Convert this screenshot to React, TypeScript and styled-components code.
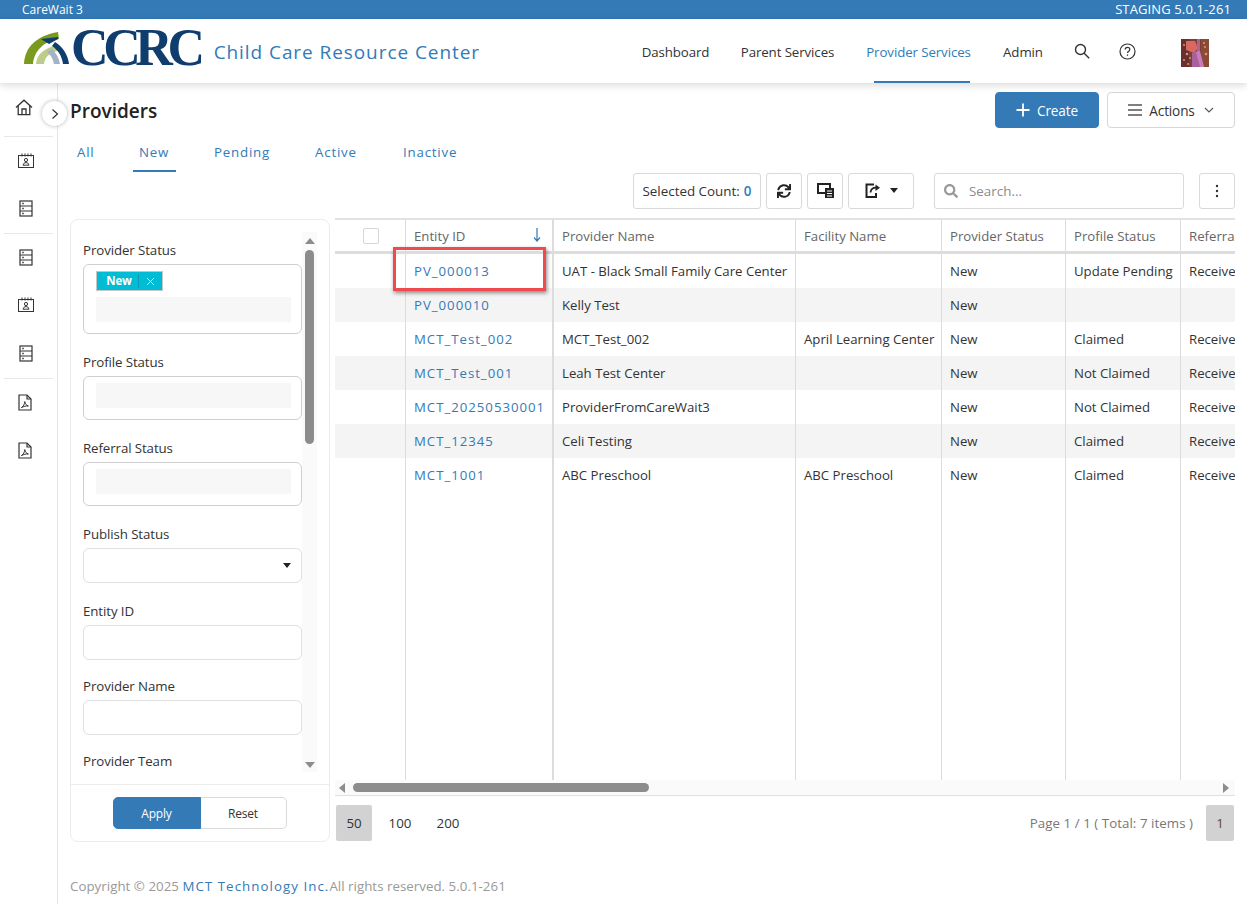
import React from 'react'
import styled, { createGlobalStyle } from 'styled-components'
import { FaSearch, FaSync } from 'react-icons/fa'

const FONT = '"Open Sans", "Noto Sans", sans-serif'
const BLUE = '#337ab7'

const GlobalStyle = createGlobalStyle`
  html, body { margin: 0; padding: 0; background: #fff; }
  body { font-family: ${FONT}; font-size: 14px; color: #333; width: 1247px; height: 904px; overflow: hidden; }
  * { box-sizing: border-box; }
`

const TopBar = styled.div`
  height: 19px;
  background: ${BLUE};
  color: #fff;
  font-size: 12px;
  line-height: 19px;
  display: flex;
  justify-content: space-between;
  padding: 0 16px 0 22px;
`

const StageTag = styled.span`
  font-size: 13px;
  letter-spacing: 0.12px;
`

const Header = styled.header`
  height: 64px;
  display: flex;
  align-items: center;
  padding-left: 24px;
  box-shadow: 0 2px 8px rgba(0, 0, 0, 0.16);
  position: relative;
  z-index: 2;
  background: #fff;
`

const LogoText = styled.span`
  font-family: "Liberation Serif", serif;
  font-weight: 700;
  font-size: 52px;
  line-height: 1;
  letter-spacing: -5.4px;
  color: #0f3d6e;
  margin-left: 1px;
  margin-top: -6px;
`

const SiteName = styled.span`
  font-size: 19px;
  letter-spacing: 0.93px;
  color: ${BLUE};
  margin-left: 14px;
  margin-top: 2px;
`

const Nav = styled.nav`
  margin-left: auto;
  display: flex;
  height: 100%;
  align-items: stretch;
`

const NavItem = styled.a<{ $active?: boolean; $w: number }>`
  width: ${(p) => p.$w}px;
  display: flex;
  align-items: center;
  justify-content: center;
  font-size: 13.3px;
  letter-spacing: -0.1px;
  color: ${(p) => (p.$active ? BLUE : '#333')};
  position: relative;
  padding-top: 1px;
  ${(p) =>
    p.$active &&
    `&::after { content: ''; position: absolute; left: 24px; right: 17px; bottom: 0; height: 2px; background: ${BLUE}; }`}
`

const NavIcon = styled.span<{ $w: number }>`
  width: ${(p) => p.$w}px;
  display: flex;
  align-items: center;
  justify-content: center;
  color: #333;
`

const Avatar = styled.span`
  width: 28px;
  height: 28px;
  display: block;
  align-self: center;
  margin: 3px 38px 0 32px;
  overflow: hidden;
`

const Body = styled.div`
  display: flex;
  height: 821px;
`

const Rail = styled.aside`
  width: 58px;
  flex: none;
  border-right: 1px solid #e6e6e6;
  position: relative;
`

const RailGroup = styled.div<{ $last?: boolean }>`
  margin: 0 4px;
  border-bottom: ${(p) => (p.$last ? 'none' : '1px solid #e8e8e8')};
`

const RailItem = styled.div<{ $h: number; $pb?: number; $pr?: number }>`
  height: ${(p) => p.$h}px;
  display: flex;
  align-items: center;
  justify-content: center;
  padding-right: ${(p) => p.$pr ?? 6}px;
  padding-bottom: ${(p) => p.$pb ?? 0}px;
  color: #333;
`

const RailToggle = styled.button`
  position: absolute;
  top: 18px;
  left: 42px;
  width: 25px;
  height: 25px;
  border-radius: 50%;
  border: none;
  background: #fff;
  box-shadow: 0 0 4px rgba(0, 0, 0, 0.3);
  padding: 0;
  display: flex;
  align-items: center;
  justify-content: center;
  z-index: 3;
`

const Main = styled.main`
  flex: 1;
  min-width: 0;
  padding: 0 12px;
`

const PageHead = styled.div`
  height: 45px;
  padding-top: 9px;
  display: flex;
  align-items: center;
  justify-content: space-between;
`

const Title = styled.h1`
  margin: 0;
  font-size: 19px;
  font-weight: 600;
  color: #222;
  padding-top: 1px;
`

const HeadActions = styled.div`
  display: flex;
  gap: 8px;
`

const BigButton = styled.button<{ $primary?: boolean; $w: number }>`
  width: ${(p) => p.$w}px;
  height: 36px;
  border-radius: 4px;
  font-family: ${FONT};
  font-size: 13.6px;
  letter-spacing: -0.15px;
  display: flex;
  align-items: center;
  justify-content: center;
  gap: 7px;
  padding: 0;
  background: ${(p) => (p.$primary ? BLUE : '#fff')};
  color: ${(p) => (p.$primary ? '#fff' : '#333')};
  border: 1px solid ${(p) => (p.$primary ? BLUE : '#d6d6d6')};
`

const Tabs = styled.div`
  display: flex;
  height: 44px;
  padding-left: 7px;
`

const Tab = styled.a<{ $active?: boolean; $w: number }>`
  display: block;
  width: ${(p) => p.$w}px;
  height: 34px;
  padding-top: 14px;
  font-size: 13.3px;
  line-height: 20px;
  letter-spacing: 0.8px;
  color: ${BLUE};
  position: relative;
  ${(p) =>
    p.$active &&
    `&::after { content: ''; position: absolute; left: -6px; width: 43px; bottom: -10px; height: 2px; background: ${BLUE}; }`}
`

const Toolbar = styled.div`
  height: 37px;
  display: flex;
  justify-content: flex-end;
  align-items: center;
`

const ToolBox = styled.div<{ $w: number; $ml?: number; $gap?: number }>`
  width: ${(p) => p.$w}px;
  height: 36px;
  margin-left: ${(p) => p.$ml ?? 5}px;
  border: 1px solid #d9d9d9;
  border-radius: 3px;
  display: flex;
  align-items: center;
  justify-content: center;
  gap: ${(p) => p.$gap ?? 6}px;
  font-size: 13.4px;
  color: #333;
  background: #fff;
`

const CountValue = styled.b`
  color: ${BLUE};
  font-weight: 600;
  margin-left: -2px;
`

const SearchBox = styled(ToolBox)`
  justify-content: flex-start;
  padding-left: 9px;
  gap: 11px;
  color: #8c8c8c;
`

const Content = styled.div`
  display: flex;
  gap: 5px;
  margin-top: 9px;
  align-items: flex-start;
`

const FilterPanel = styled.section`
  width: 260px;
  height: 623px;
  flex: none;
  margin-top: 1px;
  border: 1px solid #ececec;
  border-radius: 8px;
  display: flex;
  flex-direction: column;
  overflow: hidden;
`

const FilterScroll = styled.div`
  height: 564px;
  flex: none;
  display: flex;
  overflow: hidden;
  padding-left: 12px;
  padding-top: 21px;
`

const FilterFields = styled.div`
  width: 219px;
  flex: none;
`

const FilterLabel = styled.label`
  display: block;
  font-size: 13.3px;
  letter-spacing: -0.1px;
  line-height: 18px;
  color: #333;
`

const MultiBox = styled.div<{ $h: number; $mb: number }>`
  height: ${(p) => p.$h}px;
  margin: 5px 0 ${(p) => p.$mb}px;
  border: 1px solid #cfcfcf;
  border-radius: 6px;
  padding: 6px 12px 0;
`

const GreyInput = styled.div`
  height: 25px;
  width: 195px;
  background: #f7f7f7;
`

const Chip = styled.div`
  width: 67px;
  height: 20px;
  margin-bottom: 6px;
  background: #00bcd4;
  border: 1px solid #c6c6c6;
  color: #fff;
  font-size: 11.5px;
  font-weight: 700;
  display: flex;
  align-items: center;
  letter-spacing: -0.2px;
`

const ChipText = styled.span`
  width: 42px;
  text-align: center;
  padding-left: 3px;
  border-right: 1px solid #0a9db1;
  line-height: 14px;
`

const ChipClose = styled.span`
  flex: 1;
  display: flex;
  justify-content: center;
`

const TextInput = styled.div<{ $mb: number }>`
  height: 35px;
  margin: 5px 0 ${(p) => p.$mb}px;
  border: 1px solid #e0e0e0;
  border-radius: 6px;
  display: flex;
  align-items: center;
  justify-content: flex-end;
  padding-right: 10px;
`

const Caret = styled.span`
  width: 0;
  height: 0;
  border-left: 4.5px solid transparent;
  border-right: 4.5px solid transparent;
  border-top: 5px solid #222;
`

const ScrollTrackV = styled.div`
  width: 15px;
  flex: none;
  margin-top: -9px;
  background: #fafafa;
  display: flex;
  flex-direction: column;
  align-items: center;
  height: 540px;
`

const ThumbV = styled.div`
  width: 9px;
  height: 194px;
  margin-top: 6px;
  background: #8c8c8c;
  border-radius: 5px;
`

const ArrowUp = styled.span`
  margin-top: 6px;
  width: 0;
  height: 0;
  border-left: 5px solid transparent;
  border-right: 5px solid transparent;
  border-bottom: 6px solid #8c8c8c;
`

const ArrowDown = styled.span`
  margin-top: auto;
  margin-bottom: 4px;
  width: 0;
  height: 0;
  border-left: 5px solid transparent;
  border-right: 5px solid transparent;
  border-top: 6px solid #8c8c8c;
`

const FilterFoot = styled.div`
  flex: 1;
  border-top: 1px solid #ececec;
  display: flex;
  justify-content: center;
  align-items: flex-start;
  padding-top: 12px;
  padding-right: 1px;
`

const SegButton = styled.button<{ $primary?: boolean }>`
  width: ${(p) => (p.$primary ? 88 : 86)}px;
  height: 32px;
  padding: 0;
  font-family: ${FONT};
  font-size: 12px;
  letter-spacing: -0.2px;
  background: ${(p) => (p.$primary ? BLUE : '#fff')};
  color: ${(p) => (p.$primary ? '#fff' : '#333')};
  border: 1px solid ${(p) => (p.$primary ? BLUE : '#d9d9d9')};
  border-radius: ${(p) => (p.$primary ? '5px 0 0 5px' : '0 5px 5px 0')};
  border-left-width: ${(p) => (p.$primary ? 1 : 0)}px;
`

const GridArea = styled.div`
  width: 900px;
  flex: none;
  position: relative;
`

const GridClip = styled.div`
  height: 562px;
  overflow: hidden;
`

const Table = styled.table`
  table-layout: fixed;
  border-collapse: separate;
  border-spacing: 0;
  width: 961px;
  font-size: 13.2px;
`

const Th = styled.th<{ $thick?: boolean }>`
  height: 36px;
  padding: 0 7px 0 8px;
  text-align: left;
  font-weight: 400;
  color: #666;
  white-space: nowrap;
  overflow: hidden;
  position: relative;
  border-top: 2px solid #e2e2e2;
  border-bottom: 3px solid #ddd;
  border-right: ${(p) => (p.$thick ? '2px' : '1px')} solid #dcdcdc;
`

const SortArrow = styled.span`
  position: absolute;
  right: 11px;
  top: 7px;
  display: flex;
`

const Check = styled.span`
  display: block;
  width: 16px;
  height: 16px;
  margin: 0 auto;
  border: 1px solid #d7d7d7;
  border-radius: 2px;
`

const Tr = styled.tr<{ $alt?: boolean }>`
  background: ${(p) => (p.$alt ? '#f4f4f4' : '#fff')};
`

const Td = styled.td<{ $thick?: boolean; $link?: boolean }>`
  height: 34px;
  padding: 0 7px 0 8px;
  white-space: nowrap;
  overflow: hidden;
  color: ${(p) => (p.$link ? BLUE : '#333')};
  letter-spacing: ${(p) => (p.$link ? '1px' : 'normal')};
  border-right: ${(p) => (p.$thick ? '2px' : '1px')} solid #dcdcdc;
`

const FillerTd = styled(Td)`
  height: 321px;
`

const Highlight = styled.div`
  position: absolute;
  left: 58px;
  top: 29px;
  width: 153px;
  height: 44px;
  border: 3px solid #f04a4f;
  box-shadow: 1px 2px 4px rgba(0, 0, 0, 0.45);
  pointer-events: none;
`

const ScrollH = styled.div`
  height: 16px;
  background: #fafafa;
  border-bottom: 1px solid #e0e0e0;
  display: flex;
  align-items: center;
  padding: 0 6px 0 4px;
`

const ThumbH = styled.div`
  width: 296px;
  height: 9px;
  margin-left: 8px;
  background: #8c8c8c;
  border-radius: 5px;
`

const ArrowLeft = styled.span`
  width: 0;
  height: 0;
  border-top: 5px solid transparent;
  border-bottom: 5px solid transparent;
  border-right: 6px solid #8c8c8c;
`

const ArrowRight = styled.span`
  margin-left: auto;
  width: 0;
  height: 0;
  border-top: 5px solid transparent;
  border-bottom: 5px solid transparent;
  border-left: 6px solid #8c8c8c;
`

const Pager = styled.div`
  height: 36px;
  margin-top: 9px;
  display: flex;
  align-items: center;
  padding: 0 1px;
  font-size: 13.3px;
`

const PageSize = styled.span<{ $active?: boolean; $w: number }>`
  width: ${(p) => p.$w}px;
  height: 36px;
  display: flex;
  align-items: center;
  justify-content: center;
  border-radius: 2px;
  background: ${(p) => (p.$active ? '#d2d2d2' : 'transparent')};
  color: #333;
`

const PageInfo = styled.span`
  margin-left: auto;
  margin-right: 13px;
  color: #777;
  letter-spacing: 0.05px;
`

const PageNumber = styled(PageSize)`
  color: #5d4a35;
`

const Footer = styled.footer`
  margin-top: 35px;
  font-size: 13.3px;
  letter-spacing: 0.03px;
  color: #999;
`

const FooterLink = styled.span`
  color: ${BLUE};
  letter-spacing: 1.05px;
`

const DARK = '#333'

function HomeIcon() {
  return (
    <svg width="18" height="17" viewBox="0 0 18 17" fill="none" stroke={DARK} strokeWidth="1.3">
      <path d="M1 8.5 9 1.2l8 7.3" />
      <path d="M3.2 7v8.6h11.6V7" />
      <path d="M7 15.6V10h4v5.600" />
    </svg>
  )
}

function RosterIcon() {
  return (
    <svg width="16" height="15" viewBox="0 0 16 15" fill="none" stroke={DARK} strokeWidth="1">
      <rect x="0.5" y="2.500" width="15" height="12" />
      <path d="M4 .5v3M7 .5v3M10 .5v3M13 .5v3" />
      <circle cx="8" cy="7" r="1.600" />
      <path d="M5 12.200c.4-1.800 1.500-2.600 3-2.600s2.600.8 3 2.600z" />
    </svg>
  )
}

function ListIcon() {
  return (
    <svg width="14" height="17" viewBox="0 0 14 17" fill="none" stroke={DARK} strokeWidth="1.2">
      <rect x="1" y="1" width="12" height="15" />
      <path d="M1 6h12M1 11h12" />
      <path d="M3 3.500h2M3 8.500h2M3 13.500h2" strokeWidth="1.400" stroke="#666" />
    </svg>
  )
}

function PdfIcon() {
  return (
    <svg width="14" height="17" viewBox="0 0 14 17" fill="none" stroke={DARK} strokeWidth="1.2">
      <path d="M1 1h8l4 4v11H1z" />
      <path d="M9 1v4h4" />
      <path d="M3.400 13.600c2-1.200 3.200-3.400 3.400-6 .3 2.400 1.400 3.800 3.600 4.400-2.400-.2-4.800.4-7 1.600z" strokeWidth="1" />
    </svg>
  )
}

function ColumnsIcon() {
  return (
    <svg width="17" height="15" viewBox="0 0 17 15" fill="none">
      <path d="M1 1h12v9H1z" stroke="#222" strokeWidth="2" />
      <rect x="8" y="5" width="9" height="10" fill="#222" />
      <path d="M10 8h5M10 10.500h5M10 13h5" stroke="#fff" strokeWidth="1" />
    </svg>
  )
}

function ExportIcon() {
  return (
    <svg width="16" height="15" viewBox="0 0 16 15" fill="none" stroke="#222">
      <path d="M9 1.500H1.500v12.500h9.500V10" strokeWidth="2" />
      <path d="M5.500 9.500c.3-3 2.500-4.800 5.500-4.800" strokeWidth="1.800" />
      <path d="M10.500 1.500 15 4.800 10.500 8z" fill="#222" strokeWidth="0" />
    </svg>
  )
}

function LogoMark() {
  return (
    <svg width="46" height="34" viewBox="0 0 46 34" style={{ marginTop: -6 }}>
      <path d="M0 33C1 16 12 5 34 1l1 7C20 10 10 20 9 33z" fill="#7a9a1f" />
      <path d="M12 33c1-9 6-15 21-19l1 6c-9 2-13 6-14 13z" fill="#bdcc8d" />
      <path d="M17 8l17-2v2l-9 5z" fill="#0f3d6e" />
      <path d="M31 11c8 5 13 13 14 22h-6c-1-8-5-14-11-18z" fill="#0f3d6e" />
      <path d="M23 21l5-3c4 4 7 9 8 15h-6c-1-5-3-9-7-12z" fill="#a1b3c7" />
    </svg>
  )
}

function AvatarArt() {
  return (
    <svg width="28" height="28" viewBox="0 0 28 28">
      <rect width="28" height="28" fill="#7b3d38" />
      <rect width="8" height="28" fill="#65302f" />
      <rect x="20" width="8" height="28" fill="#8a4a38" />
      <path d="M5 2h9l3 7-4 5-8-3z" fill="#d9695f" />
      <rect x="16" y="0" width="3" height="14" fill="#b0648a" />
      <path d="M11 14l7-3 5 17H11z" fill="#a9609c" />
      <path d="M15 13l4-1 4 16h-4z" fill="#c77cbc" />
      <g fill="#e9906a">
        <circle cx="3" cy="6" r="1" /><circle cx="6" cy="15" r="1.300" /><circle cx="3" cy="21" r="1" />
        <circle cx="24" cy="8" r="1" /><circle cx="25" cy="15" r="1.300" /><circle cx="23" cy="4" r="1" />
        <circle cx="7" cy="25" r="1" /><circle cx="9" cy="19" r="1" />
      </g>
    </svg>
  )
}

const rows = [
  ['PV_000013', 'UAT - Black Small Family Care Center', '', 'New', 'Update Pending', 'Received'],
  ['PV_000010', 'Kelly Test', '', 'New', '', ''],
  ['MCT_Test_002', 'MCT_Test_002', 'April Learning Center', 'New', 'Claimed', 'Received'],
  ['MCT_Test_001', 'Leah Test Center', '', 'New', 'Not Claimed', 'Received'],
  ['MCT_20250530001', 'ProviderFromCareWait3', '', 'New', 'Not Claimed', 'Received'],
  ['MCT_12345', 'Celi Testing', '', 'New', 'Claimed', 'Received'],
  ['MCT_1001', 'ABC Preschool', 'ABC Preschool', 'New', 'Claimed', 'Received'],
]

const columns = [71, 148, 242, 146, 124, 115, 115]

export default function App() {
  return (
    <>
      <GlobalStyle />
      <TopBar>
        <span>CareWait 3</span>
        <StageTag>STAGING 5.0.1-261</StageTag>
      </TopBar>
      <Header>
        <LogoMark />
        <LogoText>CCRC</LogoText>
        <SiteName>Child Care Resource Center</SiteName>
        <Nav>
          <NavItem $w={99}>Dashboard</NavItem>
          <NavItem $w={125}>Parent Services</NavItem>
          <NavItem $w={137} $active>Provider Services</NavItem>
          <NavItem $w={72}>Admin</NavItem>
          <NavIcon $w={46}>
            <svg width="16" height="16" viewBox="0 0 16 16" fill="none" stroke="#333" strokeWidth="1.400">
              <circle cx="6.500" cy="6.500" r="5" />
              <path d="m10.200 10.200 5 5" />
            </svg>
          </NavIcon>
          <NavIcon $w={44}>
            <svg width="17" height="17" viewBox="0 0 17 17" fill="none" stroke="#333" strokeWidth="1.200">
              <circle cx="8.500" cy="8.500" r="7.500" />
              <path d="M6.200 6.600c0-1.400 1-2.200 2.300-2.200s2.300.8 2.300 2c0 1.800-2.300 1.800-2.300 3.600" />
              <path d="M8.500 11.400v1.400" />
            </svg>
          </NavIcon>
          <Avatar><AvatarArt /></Avatar>
        </Nav>
      </Header>
      <Body>
        <Rail>
          <RailToggle>
            <svg width="8" height="12" viewBox="0 0 8 12" fill="none" stroke="#333" strokeWidth="1.200">
              <path d="m1.500 1.500 5 4.500-5 4.500" />
            </svg>
          </RailToggle>
          <RailGroup>
            <RailItem $h={53} $pb={4} $pr={10}><HomeIcon /></RailItem>
          </RailGroup>
          <RailGroup>
            <RailItem $h={46}><RosterIcon /></RailItem>
            <RailItem $h={50}><ListIcon /></RailItem>
          </RailGroup>
          <RailGroup>
            <RailItem $h={46}><ListIcon /></RailItem>
            <RailItem $h={49}><RosterIcon /></RailItem>
            <RailItem $h={49}><ListIcon /></RailItem>
          </RailGroup>
          <RailGroup $last>
            <RailItem $h={46} $pr={8}><PdfIcon /></RailItem>
            <RailItem $h={50} $pr={8}><PdfIcon /></RailItem>
          </RailGroup>
        </Rail>
        <Main>
          <PageHead>
            <Title>Providers</Title>
            <HeadActions>
              <BigButton $primary $w={104}>
                <svg width="14" height="14" viewBox="0 0 14 14" stroke="#fff" strokeWidth="1.800">
                  <path d="M7 .5v13M.5 7h13" />
                </svg>
                Create
              </BigButton>
              <BigButton $w={128}>
                <svg width="14" height="12" viewBox="0 0 14 12" stroke="#555" strokeWidth="1.300">
                  <path d="M0 1h14M0 6h14M0 11h14" />
                </svg>
                Actions
                <svg width="10" height="6" viewBox="0 0 10 6" fill="none" stroke="#555" strokeWidth="1.100" style={{ marginLeft: 2 }}>
                  <path d="m1 1 4 4 4-4" />
                </svg>
              </BigButton>
            </HeadActions>
          </PageHead>
          <Tabs>
            <Tab $w={62}>All</Tab>
            <Tab $w={75} $active>New</Tab>
            <Tab $w={101}>Pending</Tab>
            <Tab $w={88}>Active</Tab>
            <Tab $w={80}>Inactive</Tab>
          </Tabs>
          <Toolbar>
            <ToolBox $w={128}>
              Selected Count: <CountValue>0</CountValue>
            </ToolBox>
            <ToolBox $w={36}><FaSync size={14} color="#222" /></ToolBox>
            <ToolBox $w={36}><ColumnsIcon /></ToolBox>
            <ToolBox $w={66} $gap={9}>
              <ExportIcon />
              <Caret />
            </ToolBox>
            <SearchBox $w={250} $ml={20}>
              <FaSearch size={14} color="#999" />
              Search...
            </SearchBox>
            <ToolBox $w={36} $ml={15}>
              <svg width="4" height="14" viewBox="0 0 4 14" fill="#333">
                <circle cx="2" cy="2" r="1.200" /><circle cx="2" cy="7" r="1.200" /><circle cx="2" cy="12" r="1.200" />
              </svg>
            </ToolBox>
          </Toolbar>
          <Content>
            <FilterPanel>
              <FilterScroll>
                <FilterFields>
                  <FilterLabel>Provider Status</FilterLabel>
                  <MultiBox $h={70} $mb={19}>
                    <Chip>
                      <ChipText>New</ChipText>
                      <ChipClose>
                        <svg width="9" height="9" viewBox="0 0 9 9" stroke="#e6fbfe" strokeWidth="1">
                          <path d="m1 1 7 7M8 1 1 8" />
                        </svg>
                      </ChipClose>
                    </Chip>
                    <GreyInput />
                  </MultiBox>
                  <FilterLabel>Profile Status</FilterLabel>
                  <MultiBox $h={44} $mb={19}><GreyInput /></MultiBox>
                  <FilterLabel>Referral Status</FilterLabel>
                  <MultiBox $h={44} $mb={19}><GreyInput /></MultiBox>
                  <FilterLabel>Publish Status</FilterLabel>
                  <TextInput $mb={19}><Caret /></TextInput>
                  <FilterLabel>Entity ID</FilterLabel>
                  <TextInput $mb={17}></TextInput>
                  <FilterLabel>Provider Name</FilterLabel>
                  <TextInput $mb={17}></TextInput>
                  <FilterLabel>Provider Team</FilterLabel>
                </FilterFields>
                <ScrollTrackV>
                  <ArrowUp />
                  <ThumbV />
                  <ArrowDown />
                </ScrollTrackV>
              </FilterScroll>
              <FilterFoot>
                <SegButton $primary>Apply</SegButton>
                <SegButton>Reset</SegButton>
              </FilterFoot>
            </FilterPanel>
            <GridArea>
              <GridClip>
                <Table>
                  <colgroup>
                    {columns.map((w, i) => (
                      <col key={i} style={{ width: w }} />
                    ))}
                  </colgroup>
                  <thead>
                    <tr>
                      <Th><Check /></Th>
                      <Th $thick>
                        Entity ID
                        <SortArrow>
                          <svg width="8" height="16" viewBox="0 0 8 16" fill="none" stroke={BLUE} strokeWidth="1.200">
                            <path d="M4 1v13M1 10.500 4 14l3-3.500" />
                          </svg>
                        </SortArrow>
                      </Th>
                      <Th>Provider Name</Th>
                      <Th>Facility Name</Th>
                      <Th>Provider Status</Th>
                      <Th>Profile Status</Th>
                      <Th>Referral Status</Th>
                    </tr>
                  </thead>
                  <tbody>
                    {rows.map((r, i) => (
                      <Tr key={r[0]} $alt={i % 2 === 1}>
                        <Td />
                        <Td $link $thick>{r[0]}</Td>
                        {r.slice(1).map((c, j) => (
                          <Td key={j}>{c}</Td>
                        ))}
                      </Tr>
                    ))}
                    <tr>
                      <FillerTd />
                      <FillerTd $thick />
                      <FillerTd />
                      <FillerTd />
                      <FillerTd />
                      <FillerTd />
                      <FillerTd />
                    </tr>
                  </tbody>
                </Table>
              </GridClip>
              <Highlight />
              <ScrollH>
                <ArrowLeft />
                <ThumbH />
                <ArrowRight />
              </ScrollH>
              <Pager>
                <PageSize $active $w={36}>50</PageSize>
                <PageSize $w={56}>100</PageSize>
                <PageSize $w={40}>200</PageSize>
                <PageInfo>Page 1 / 1 ( Total: 7 items )</PageInfo>
                <PageNumber $active $w={28}>1</PageNumber>
              </Pager>
            </GridArea>
          </Content>
          <Footer>
            Copyright © 2025 <FooterLink>MCT Technology Inc.</FooterLink>All rights reserved. 5.0.1-261
          </Footer>
        </Main>
      </Body>
    </>
  )
}
